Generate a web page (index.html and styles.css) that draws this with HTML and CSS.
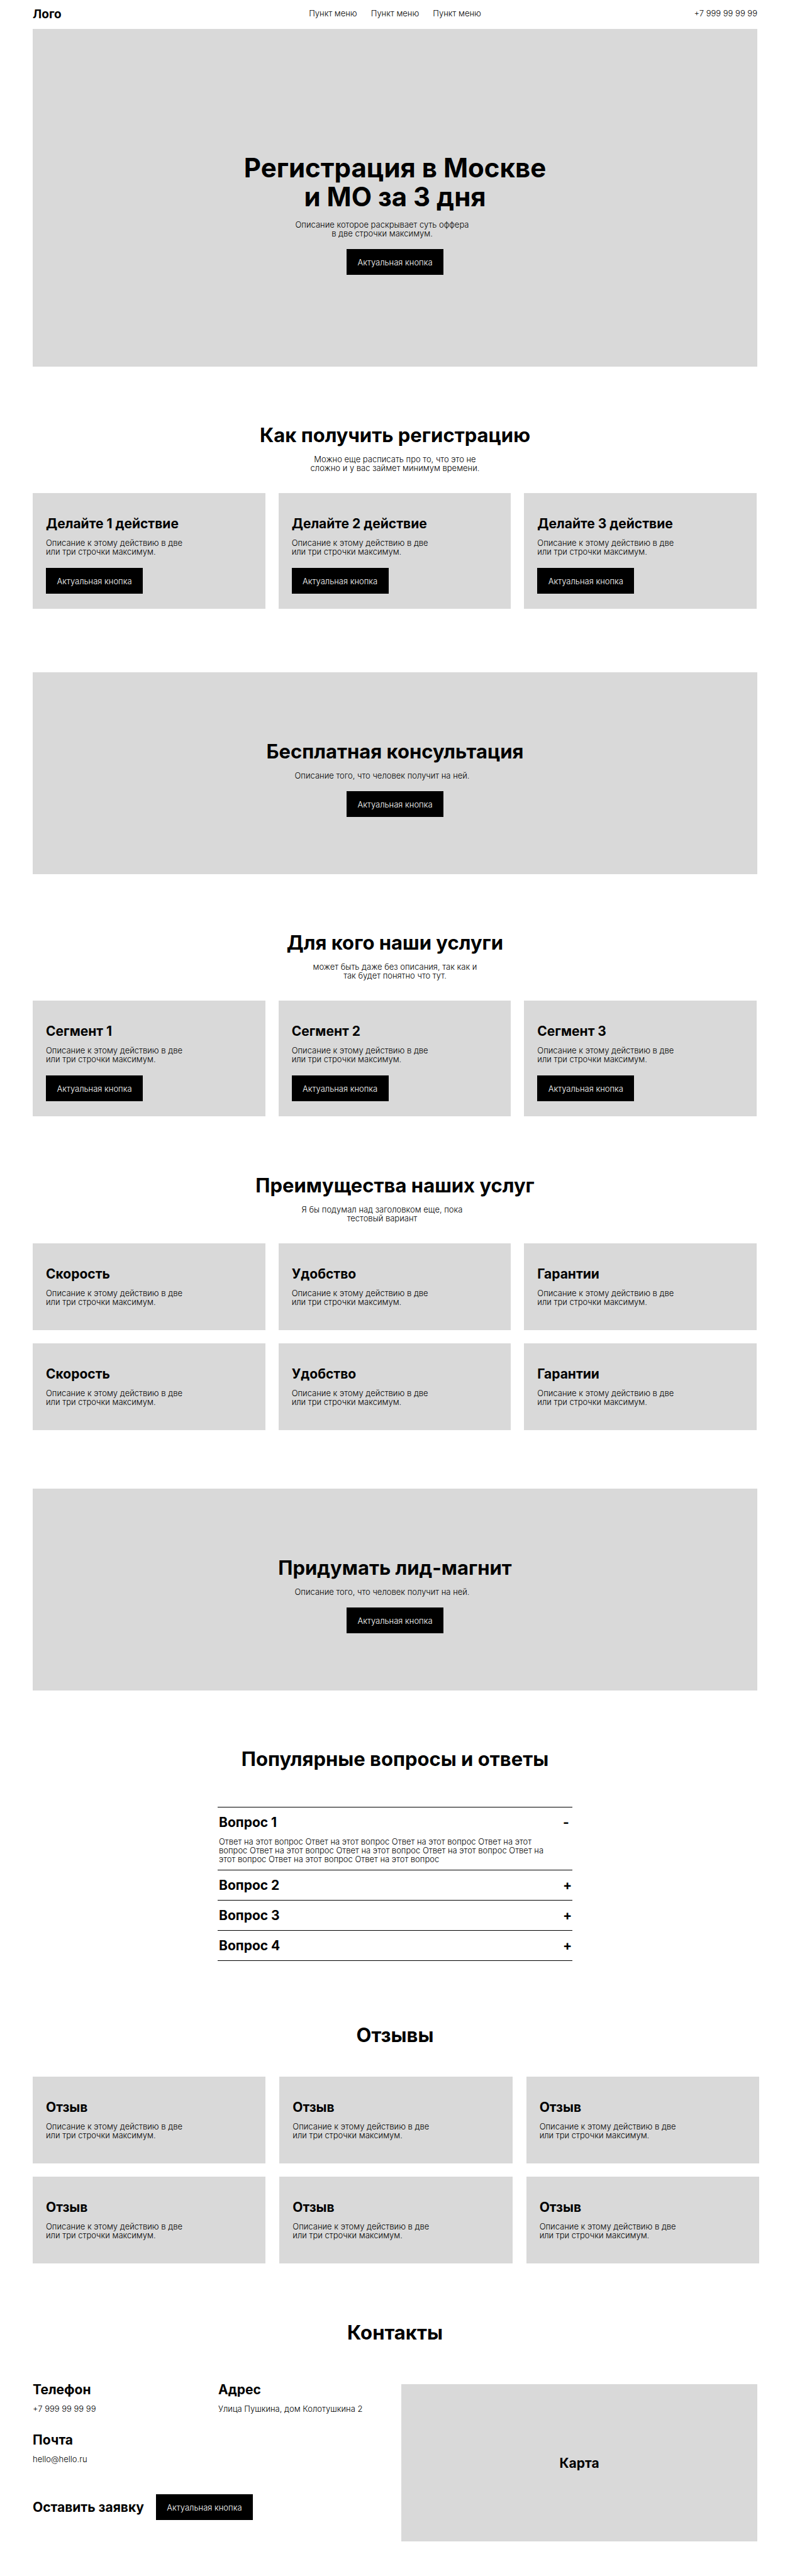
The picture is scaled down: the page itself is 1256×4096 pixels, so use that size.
FILE: index.html
```html
<!DOCTYPE html>
<html lang="ru">
<head>
<meta charset="utf-8">
<meta name="viewport" content="width=device-width, initial-scale=1">
<title>Регистрация в Москве и МО</title>
<link rel="stylesheet" href="styles.css">
</head>
<body>
<header class="header">
  <a class="logo" href="#">Лого</a>
  <nav class="nav">
    <a href="#steps">Пункт меню</a>
    <a href="#segments">Пункт меню</a>
    <a href="#benefits">Пункт меню</a>
  </nav>
  <a class="header-phone" href="tel:+7999999999">+7 999 99 99 99</a>
</header>
<main>
  <section class="banner hero">
    <h1>Регистрация в Москве<br>и МО за 3 дня</h1>
    <p class="lead lead-shifted">Описание которое раскрывает суть оффера<br>в две строчки максимум.</p>
    <button class="button" type="button">Актуальная кнопка</button>
  </section>

  <section class="section" id="steps">
    <h2>Как получить регистрацию</h2>
    <p class="lead">Можно еще расписать про то, что это не<br>сложно и у вас займет минимум времени.</p>
    <div class="cards">
      <article class="card">
        <h3>Делайте 1 действие</h3>
        <p>Описание к этому действию в две<br>или три строчки максимум.</p>
        <button class="button" type="button">Актуальная кнопка</button>
      </article>
      <article class="card">
        <h3>Делайте 2 действие</h3>
        <p>Описание к этому действию в две<br>или три строчки максимум.</p>
        <button class="button" type="button">Актуальная кнопка</button>
      </article>
      <article class="card">
        <h3>Делайте 3 действие</h3>
        <p>Описание к этому действию в две<br>или три строчки максимум.</p>
        <button class="button" type="button">Актуальная кнопка</button>
      </article>
    </div>
  </section>

  <section class="banner consult">
    <h2>Бесплатная консультация</h2>
    <p class="lead lead-shifted">Описание того, что человек получит на ней.</p>
    <button class="button" type="button">Актуальная кнопка</button>
  </section>

  <section class="section" id="segments">
    <h2>Для кого наши услуги</h2>
    <p class="lead">может быть даже без описания, так как и<br>так будет понятно что тут.</p>
    <div class="cards">
      <article class="card">
        <h3>Сегмент 1</h3>
        <p>Описание к этому действию в две<br>или три строчки максимум.</p>
        <button class="button" type="button">Актуальная кнопка</button>
      </article>
      <article class="card">
        <h3>Сегмент 2</h3>
        <p>Описание к этому действию в две<br>или три строчки максимум.</p>
        <button class="button" type="button">Актуальная кнопка</button>
      </article>
      <article class="card">
        <h3>Сегмент 3</h3>
        <p>Описание к этому действию в две<br>или три строчки максимум.</p>
        <button class="button" type="button">Актуальная кнопка</button>
      </article>
    </div>
  </section>

  <section class="section" id="benefits">
    <h2>Преимущества наших услуг</h2>
    <p class="lead lead-shifted">Я бы подумал над заголовком еще, пока<br>тестовый вариант</p>
    <div class="cards cards-plain">
      <article class="card">
        <h3>Скорость</h3>
        <p>Описание к этому действию в две<br>или три строчки максимум.</p>
      </article>
      <article class="card">
        <h3>Удобство</h3>
        <p>Описание к этому действию в две<br>или три строчки максимум.</p>
      </article>
      <article class="card">
        <h3>Гарантии</h3>
        <p>Описание к этому действию в две<br>или три строчки максимум.</p>
      </article>
      <article class="card">
        <h3>Скорость</h3>
        <p>Описание к этому действию в две<br>или три строчки максимум.</p>
      </article>
      <article class="card">
        <h3>Удобство</h3>
        <p>Описание к этому действию в две<br>или три строчки максимум.</p>
      </article>
      <article class="card">
        <h3>Гарантии</h3>
        <p>Описание к этому действию в две<br>или три строчки максимум.</p>
      </article>
    </div>
  </section>

  <section class="banner magnet">
    <h2>Придумать лид-магнит</h2>
    <p class="lead lead-shifted">Описание того, что человек получит на ней.</p>
    <button class="button" type="button">Актуальная кнопка</button>
  </section>

  <section class="section">
    <h2>Популярные вопросы и ответы</h2>
    <div class="faq">
      <details open>
        <summary>Вопрос 1</summary>
        <p>Ответ на этот вопрос Ответ на этот вопрос Ответ на этот вопрос Ответ на этот вопрос Ответ на этот вопрос Ответ на этот вопрос Ответ на этот вопрос Ответ на этот вопрос Ответ на этот вопрос Ответ на этот вопрос</p>
      </details>
      <details>
        <summary>Вопрос 2</summary>
        <p>Ответ на этот вопрос</p>
      </details>
      <details>
        <summary>Вопрос 3</summary>
        <p>Ответ на этот вопрос</p>
      </details>
      <details>
        <summary>Вопрос 4</summary>
        <p>Ответ на этот вопрос</p>
      </details>
    </div>
  </section>

  <section class="section reviews">
    <h2>Отзывы</h2>
    <div class="cards cards-plain cards-reviews">
      <article class="card">
        <h3>Отзыв</h3>
        <p>Описание к этому действию в две<br>или три строчки максимум.</p>
      </article>
      <article class="card">
        <h3>Отзыв</h3>
        <p>Описание к этому действию в две<br>или три строчки максимум.</p>
      </article>
      <article class="card">
        <h3>Отзыв</h3>
        <p>Описание к этому действию в две<br>или три строчки максимум.</p>
      </article>
      <article class="card">
        <h3>Отзыв</h3>
        <p>Описание к этому действию в две<br>или три строчки максимум.</p>
      </article>
      <article class="card">
        <h3>Отзыв</h3>
        <p>Описание к этому действию в две<br>или три строчки максимум.</p>
      </article>
      <article class="card">
        <h3>Отзыв</h3>
        <p>Описание к этому действию в две<br>или три строчки максимум.</p>
      </article>
    </div>
  </section>

  <section class="section contacts-section">
    <h2>Контакты</h2>
    <div class="contacts">
      <div>
        <div class="contact-list">
          <div class="contact">
            <h3>Телефон</h3>
            <a href="tel:+7999999999">+7 999 99 99 99</a>
          </div>
          <div class="contact">
            <h3>Адрес</h3>
            <p>Улица Пушкина, дом Колотушкина 2</p>
          </div>
          <div class="contact">
            <h3>Почта</h3>
            <a href="mailto:hello@hello.ru">hello@hello.ru</a>
          </div>
        </div>
        <div class="request">
          <h3>Оставить заявку</h3>
          <button class="button" type="button">Актуальная кнопка</button>
        </div>
      </div>
      <div class="map"><h3>Карта</h3></div>
    </div>
  </section>
</main>
</body>
</html>
```
FILE: styles.css
```css
* {
  box-sizing: border-box;
}

body {
  margin: 0;
  padding: 0 52px 54px;
  background: #fff;
  color: #000;
  font: 300 13px/14px Inter, "Liberation Sans", sans-serif;
}

h1, h2, h3, p {
  margin: 0;
}

h1, h2, h3 {
  font-weight: 700;
}

h1 {
  font-size: 42px;
  line-height: 46px;
}

h2 {
  font-size: 31px;
  line-height: 34px;
}

h3 {
  font-size: 21px;
  line-height: 23px;
}

a {
  color: inherit;
  text-decoration: none;
}

.header {
  display: grid;
  grid-template-columns: 1fr auto 1fr;
  height: 46px;
  padding-top: 14px;
}

.logo {
  font-size: 19px;
  line-height: 17px;
  font-weight: 700;
}

.nav {
  display: flex;
  gap: 22px;
}

.header-phone {
  justify-self: end;
}

.button {
  width: 154px;
  height: 41px;
  padding: 0;
  border: 0;
  background: #000;
  color: #fff;
  font: inherit;
  cursor: pointer;
}

.banner {
  display: flex;
  flex-direction: column;
  align-items: center;
  padding: 109px 0 91px;
  background: #d9d9d9;
  text-align: center;
}

.banner .button {
  margin-top: 18px;
}

.hero {
  padding: 198px 0 146px;
}

.consult {
  margin-top: 101px;
}

.magnet {
  margin-top: 93px;
}

.lead {
  margin-top: 14px;
  text-align: center;
}

.lead-shifted {
  padding-right: 41px;
}

.section {
  padding-top: 92px;
}

.section > h2 {
  text-align: center;
}

.reviews {
  padding-top: 101px;
}

#benefits,
.contacts-section {
  padding-top: 93px;
}

.cards {
  display: grid;
  grid-template-columns: repeat(3, 1fr);
  gap: 21px;
  margin: 33px 1px 0 0;
}

/* The review row runs slightly past the right edge of the page column. */
.cards-reviews {
  column-gap: 22px;
  margin: 49px -3px 0 0;
}

.card {
  padding: 37px 21px 24px;
  background: #d9d9d9;
}

.cards-plain .card {
  padding-bottom: 38px;
}

.card p {
  margin-top: 12px;
}

.card .button {
  display: block;
  margin-top: 19px;
}

.faq {
  max-width: 564px;
  margin: 59px auto 0;
  border-top: 1px solid #000;
}

.faq details {
  border-bottom: 1px solid #000;
}

.faq summary {
  display: flex;
  justify-content: space-between;
  padding: 12px 0 12px 2px;
  font-size: 21px;
  line-height: 23px;
  font-weight: 700;
  list-style: none;
  cursor: pointer;
}

.faq summary::after {
  content: "+";
  width: 15px;
}

.faq details[open] summary::after {
  content: "-";
}

.faq p {
  max-width: 520px;
  padding: 0 0 10px 2px;
}

.contacts {
  display: grid;
  grid-template-columns: 586fr 566fr;
  align-items: start;
  margin-top: 62px;
}

.contact-list {
  display: grid;
  grid-template-columns: 295fr 291fr;
  row-gap: 31px;
}

.contact h3 {
  margin-bottom: 12px;
}

.contact a {
  display: block;
}

.request {
  display: flex;
  align-items: center;
  gap: 19px;
  margin-top: 49px;
}

.map {
  display: flex;
  align-items: center;
  justify-content: center;
  min-height: 250px;
  margin-top: 3px;
  background: #d9d9d9;
}
```
